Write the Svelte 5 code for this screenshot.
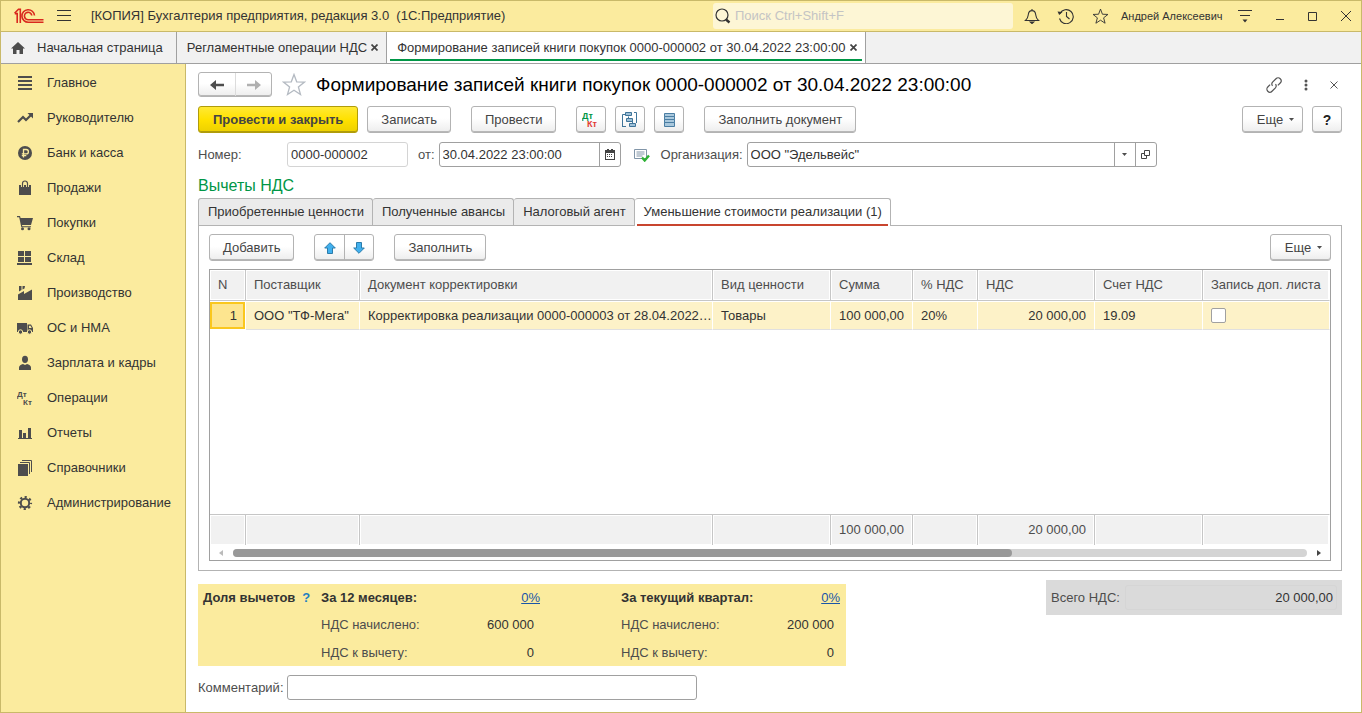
<script>
  const sections = [
    ['list', 'Главное'],
    ['trend', 'Руководителю'],
    ['ruble', 'Банк и касса'],
    ['bag', 'Продажи'],
    ['cart', 'Покупки'],
    ['store', 'Склад'],
    ['factory', 'Производство'],
    ['truck', 'ОС и НМА'],
    ['person', 'Зарплата и кадры'],
    ['entries', 'Операции'],
    ['chart', 'Отчеты'],
    ['books', 'Справочники'],
    ['gear', 'Администрирование'],
  ];

  const docTabs = ['Приобретенные ценности', 'Полученные авансы', 'Налоговый агент', 'Уменьшение стоимости реализации (1)'];
  let activeTab = $state(3);

  const columns = [
    { title: 'N', cls: 'c-n' },
    { title: 'Поставщик', cls: 'c-supplier' },
    { title: 'Документ корректировки', cls: 'c-doc' },
    { title: 'Вид ценности', cls: 'c-kind' },
    { title: 'Сумма', cls: 'c-sum' },
    { title: '% НДС', cls: 'c-rate' },
    { title: 'НДС', cls: 'c-vat' },
    { title: 'Счет НДС', cls: 'c-account' },
    { title: 'Запись доп. листа', cls: 'c-extra' },
  ];

  const shares = [
    { title: 'За 12 месяцев:', percent: '0%', charged: '600 000', deducted: '0' },
    { title: 'За текущий квартал:', percent: '0%', charged: '200 000', deducted: '0' },
  ];

  let number = $state('0000-000002');
  let date = $state('30.04.2022 23:00:00');
  let organization = $state('ООО "Эдельвейс"');
  let comment = $state('');
  let extraSheet = $state(false);
</script>

{#snippet sectionIcon(name)}
  <svg class="section-icon" width="16" height="16" viewBox="0 0 16 16" fill="#4d4d4d" aria-hidden="true">
    {#if name === 'list'}
      <path d="M1 1h14v2H1zM1 5h14v2H1zM1 9h14v2H1zM1 13h14v2H1z" />
    {:else if name === 'trend'}
      <path d="M1 12 6 7l3 3 5-5" fill="none" stroke="#4d4d4d" stroke-width="2.2" />
      <path d="M10.500 3H16v5.500z" />
    {:else if name === 'ruble'}
      <circle cx="8" cy="8" r="7" />
      <path d="M6.500 12.500V4.500h2.700a2.200 2.200 0 0 1 0 4.400H4.800M4.800 10.700h4.500" fill="none" stroke="#fbeb9e" stroke-width="1.300" />
    {:else if name === 'bag'}
      <path d="M2 5h12v10H2z" />
      <path d="M5.500 7V3.500a2.500 2.500 0 0 1 5 0V7" fill="none" stroke="#fbeb9e" stroke-width="3" />
      <path d="M5.500 7V3.500a2.500 2.500 0 0 1 5 0V7" fill="none" stroke="#4d4d4d" stroke-width="1.200" />
    {:else if name === 'cart'}
      <path d="M0 1h3l.600 2H16l-2 7H5l.300 1.300H14v1H4.300L2.200 2.200H0z" />
      <circle cx="5.500" cy="13.800" r="1.500" /><circle cx="12" cy="13.800" r="1.500" />
    {:else if name === 'store'}
      <path d="M1 1h6v5H1zM8 1h6v5H8zM1 7h6v5H1zM8 7h6v5H8zM0 13h15v2H0z" />
    {:else if name === 'factory'}
      <path d="M1 15V9.500L7 6v3l8-4.500V15z" />
      <path d="M2 1h2.500v4L2 6.500zM5.500 1H8l-.5 2.500-2 1z" />
    {:else if name === 'truck'}
      <path d="M0 3h10v9H0zM10.500 4.500H14l2 3.500v4h-5.500z" />
      <path d="M12 5.700h1.500l1.200 2.300H12z" fill="#fbeb9e" />
      <circle cx="3.500" cy="12" r="2.200" stroke="#fbeb9e" stroke-width="1" /><circle cx="12.500" cy="12" r="2.200" stroke="#fbeb9e" stroke-width="1" />
    {:else if name === 'person'}
      <ellipse cx="8" cy="4.300" rx="3" ry="3.600" />
      <path d="M2 15v-2.500c0-2 2-3 4-3.500l2 1 2-1c2 .5 4 1.500 4 3.500V15z" />
    {:else if name === 'entries'}
      <text x="0" y="7" font-size="8" font-weight="700">Дт</text>
      <text x="6" y="15" font-size="8" font-weight="700">Кт</text>
    {:else if name === 'chart'}
      <path d="M1 13h14v1H1zM2 5h3v8H2zM6 8h3v5H6zM11 3h3v10h-3z" />
    {:else if name === 'books'}
      <path d="M1 4h10v12H1z" />
      <path d="M3 2.500h9.500V14M5 .500h9.500V12" fill="none" stroke="#4d4d4d" />
    {:else if name === 'gear'}
      <circle cx="8" cy="8" r="4.200" fill="none" stroke="#4d4d4d" stroke-width="2" />
      <circle cx="8" cy="8" r="6" fill="none" stroke="#4d4d4d" stroke-width="2.200" stroke-dasharray="2.200 2.512" stroke-dashoffset="1.100" />
    {/if}
  </svg>
{/snippet}

{#snippet caret()}
  <svg class="caret" width="5" height="3" viewBox="0 0 5 3" aria-hidden="true"><path d="M0 0h5L2.500 3z" fill="#4d4d4d" /></svg>
{/snippet}

{#snippet star(size, color)}
  <svg width={size} height={size} viewBox="0 0 24 24" fill="none" stroke={color} stroke-width="1.300" aria-hidden="true">
    <path d="M12 1.500l2.700 7.300 7.800.3-6.100 4.800 2.100 7.600-6.500-4.300-6.500 4.300 2.100-7.600L1.500 9.100l7.800-.3z" />
  </svg>
{/snippet}

<div class="window">
  <header class="titlebar">
    <svg class="logo" width="30" height="16" viewBox="0 0 30 16" fill="none" stroke="#d9281e" stroke-width="1.600" aria-label="1С">
      <path d="M.500 5.300 4.500 1.200h1.800V15M.800 5.600h2.400V15" />
      <path d="M20.500 7.500A6.300 6.300 0 1 0 14.500 14.300H29.500" />
      <path d="M17.800 7.500A3.700 3.700 0 1 0 14.500 11.700H29.500" />
    </svg>
    <button class="plain burger" aria-label="Главное меню">
      <svg width="14" height="12" viewBox="0 0 14 12" fill="#333"><path d="M0 0h14v1H0zM0 5h14v1H0zM0 10h14v1H0z" /></svg>
    </button>
    <span class="app-name">[КОПИЯ] Бухгалтерия предприятия, редакция 3.0 &nbsp;(1С:Предприятие)</span>
    <label class="search">
      <svg width="16" height="16" viewBox="0 0 16 16" fill="none" stroke="#333"><circle cx="7" cy="7" r="6" stroke-width="1.200" /><path d="M11 11.500l3.500 3" stroke-width="2.400" /></svg>
      <input type="search" placeholder="Поиск Ctrl+Shift+F" aria-label="Поиск" />
    </label>
    <div class="title-tools">
      <button class="plain" aria-label="Уведомления">
        <svg width="16" height="16" viewBox="0 0 16 16" fill="none" stroke="#333" stroke-width="1.100"><path d="M1.500 12.500C4 10.500 4 9 4.300 6.500 4.600 4 6 2.600 8 2.600s3.400 1.400 3.700 3.900C12 9 12 10.500 14.500 12.500zM8 2.600V1" /><path d="M6.300 14h3.400L8 15.500z" fill="#333" /></svg>
      </button>
      <button class="plain" aria-label="История">
        <svg width="18" height="16" viewBox="0 0 18 16" fill="none" stroke="#333" stroke-width="1.100"><path d="M3 5.500a7 7 0 1 1-.5 5" /><path d="M9.500 4v4.500l3 2.500" /><path d="M.500 3.500l5 .5-3.300 3z" fill="#333" stroke="none" /></svg>
      </button>
      <button class="plain" aria-label="Избранное">{@render star(17, '#333')}</button>
      <span class="user">Андрей Алексеевич</span>
      <button class="plain" aria-label="Настройки панели">
        <svg width="14" height="14" viewBox="0 0 14 14" fill="#333"><path d="M0 1h14v1H0zM2 6h10v1H2zM4.500 10.500h5L7 13.500z" /></svg>
      </button>
      <button class="plain" aria-label="Свернуть">
        <svg width="10" height="10" viewBox="0 0 10 10" fill="#333"><path d="M1 8h8v1H1z" /></svg>
      </button>
      <button class="plain" aria-label="Развернуть">
        <svg width="10" height="10" viewBox="0 0 10 10" fill="none" stroke="#333"><path d="M.500 1.500h8v8h-8z" /></svg>
      </button>
      <button class="plain" aria-label="Закрыть окно">
        <svg width="10" height="10" viewBox="0 0 10 10" fill="none" stroke="#333"><path d="M0 0l10 10M10 0L0 10" /></svg>
      </button>
    </div>
  </header>

  <nav class="page-tabs" aria-label="Открытые страницы">
    <div class="page-tab home">
      <svg width="14" height="12" viewBox="0 0 14 12" fill="#4d4d4d" aria-hidden="true"><path d="M7 0l7 6.500h-2V12H8.500V8h-3v4H2V6.500H0z" /></svg>
      <button class="plain">Начальная страница</button>
    </div>
    <div class="page-tab">
      <button class="plain">Регламентные операции НДС</button>
      <button class="plain tab-close" aria-label="Закрыть вкладку"><svg width="7" height="7" viewBox="0 0 7 7" stroke="#444" stroke-width="1.700"><path d="M.500.500l6 6M6.500.500l-6 6" /></svg></button>
    </div>
    <div class="page-tab current">
      <button class="plain">Формирование записей книги покупок 0000-000002 от 30.04.2022 23:00:00</button>
      <button class="plain tab-close" aria-label="Закрыть вкладку"><svg width="7" height="7" viewBox="0 0 7 7" stroke="#444" stroke-width="1.700"><path d="M.500.500l6 6M6.500.500l-6 6" /></svg></button>
    </div>
  </nav>

  <div class="workspace">
    <nav class="sidebar" aria-label="Разделы">
      {#each sections as [icon, title]}
        <a class="section" href="#{icon}">{@render sectionIcon(icon)}<span>{title}</span></a>
      {/each}
    </nav>

    <main class="document">
      <div class="doc-head">
        <div class="button-pair nav-pair">
          <button aria-label="Назад"><svg width="14" height="10" viewBox="0 0 14 10" fill="#4d4d4d"><path d="M0 5l6-5v3.800h8v2.400H6V10z" /></svg></button>
          <button aria-label="Вперед"><svg width="14" height="10" viewBox="0 0 14 10" fill="#b0b0b0"><path d="M14 5L8 0v3.800H0v2.400h8V10z" /></svg></button>
        </div>
        <button class="plain favorite" aria-label="В избранное">{@render star(24, '#b4bac2')}</button>
        <h1>Формирование записей книги покупок 0000-000002 от 30.04.2022 23:00:00</h1>
        <div class="head-tools">
          <button class="plain" aria-label="Получить ссылку">
            <svg width="16" height="16" viewBox="0 0 16 16" fill="none" stroke="#555" stroke-width="1.200"><g transform="rotate(-45 8 8)"><path d="M5.500 5H2.200a3 3 0 0 0 0 6H7a2.800 2.800 0 0 0 2.600-2.500" /><path d="M10.500 11h3.300a3 3 0 0 0 0-6H9a2.800 2.800 0 0 0-2.600 2.500" /></g></svg>
          </button>
          <button class="plain" aria-label="Дополнительно">
            <svg width="4" height="12" viewBox="0 0 4 12" fill="#555"><circle cx="2" cy="2" r="1.500" /><circle cx="2" cy="6" r="1.500" /><circle cx="2" cy="10" r="1.500" /></svg>
          </button>
          <button class="plain" aria-label="Закрыть">
            <svg width="8" height="8" viewBox="0 0 8 8" fill="none" stroke="#555"><path d="M.500.500l7 7M7.500.500l-7 7" /></svg>
          </button>
        </div>
      </div>

      <div class="toolbar">
        <button class="btn primary">Провести и закрыть</button>
        <button class="btn">Записать</button>
        <button class="btn apart">Провести</button>
        <button class="btn square apart" aria-label="Проводки">
          <svg width="18" height="16" viewBox="0 0 18 16" font-size="9" font-weight="700"><text x="0" y="7" fill="#009646">Дт</text><text x="5" y="15" fill="#e23a34">Кт</text></svg>
        </button>
        <button class="btn square" aria-label="Структура подчиненности">
          <svg width="16" height="16" viewBox="0 0 16 16" fill="#9dc0d8" stroke="#3f7499"><path d="M3 2.500H.500V15M.500 14.500H4M12 .500h2.500V11M6.500 4.500V7M10.500 8.500v3" fill="none" /><path d="M3.500.500h6v3h-6zM4.500 6.500h6v3h-6zM7.500 11.500h6v3h-6z" /></svg>
        </button>
        <button class="btn square" aria-label="Реестр">
          <svg width="11" height="14" viewBox="0 0 11 14" fill="#a9c8dd" stroke="#4b7ea3"><path d="M.500.500h10v3h-10zM.500 3.500h10v3h-10zM.500 6.500h10v3h-10zM.500 9.500h10v4h-10z" /></svg>
        </button>
        <button class="btn apart">Заполнить документ</button>
        <button class="btn more push">Еще {@render caret()}</button>
        <button class="btn square help" aria-label="Справка">?</button>
      </div>

      <div class="fields">
        <label class="first-label" for="number">Номер:</label>
        <input id="number" class="box number" bind:value={number} readonly />
        <label class="date-label" for="date">от:</label>
        <div class="box combo date">
          <input id="date" bind:value={date} />
          <button aria-label="Выбрать дату">
            <svg width="10" height="11" viewBox="0 0 10 11" fill="#444"><path d="M1 1h1V0h2v1h2V0h2v1h2v10H0V1zM1 4v6h8V4z" fill-rule="evenodd" /><path d="M2 5h1v1H2zM4 5h1v1H4zM6 5h1v1H6zM2 7h1v1H2zM4 7h1v1H4zM6 7h1v1H6z" /></svg>
          </button>
        </div>
        <svg class="posted" width="16" height="13" viewBox="0 0 16 13" aria-label="Проведен"><path d="M.500.500h12v9H.500z" fill="#fff" stroke="#8195a8" /><path d="M2.500 3h8M2.500 5h8M2.500 7h6" stroke="#8195a8" /><path d="M8 8.500l2.700 3L15 6.500" fill="none" stroke="#2eb135" stroke-width="2.400" /></svg>
        <label for="organization">Организация:</label>
        <div class="box combo organization">
          <input id="organization" bind:value={organization} />
          <button aria-label="Выбрать из списка">{@render caret()}</button>
          <button aria-label="Открыть"><svg width="9" height="9" viewBox="0 0 9 9" fill="none" stroke="#444"><path d="M3.500.500h5v5h-5zM3 3.500H.500v5h5V6" /></svg></button>
        </div>
      </div>

      <h2>Вычеты НДС</h2>

      <div class="doc-tabs" role="tablist">
        {#each docTabs as title, i}
          <button role="tab" aria-selected={i === activeTab} class:selected={i === activeTab} onclick={() => (activeTab = i)}>{title}</button>
        {/each}
      </div>

      <section class="panel">
        <div class="toolbar inner">
          <button class="btn">Добавить</button>
          <div class="button-pair move-pair">
            <button aria-label="Переместить вверх"><svg width="12" height="12" viewBox="0 0 12 12" fill="#41b0ee" stroke="#2b7cab"><path d="M6 .700L11.300 6H8.500v5.500h-5V6H.700z" /></svg></button>
            <button aria-label="Переместить вниз"><svg width="12" height="12" viewBox="0 0 12 12" fill="#41b0ee" stroke="#2b7cab"><path d="M6 11.300L.700 6h2.800V.500h5V6h2.800z" /></svg></button>
          </div>
          <button class="btn">Заполнить</button>
          <button class="btn more push">Еще {@render caret()}</button>
        </div>

        <div class="grid-frame">
          <table>
            <colgroup>
              {#each columns as c}<col class={c.cls} />{/each}
            </colgroup>
            <thead>
              <tr>{#each columns as c}<th>{c.title}</th>{/each}</tr>
            </thead>
            <tbody>
              <tr class="row">
                <td class="num active-cell">1</td>
                <td>ООО "ТФ-Мега"</td>
                <td>Корректировка реализации 0000-000003 от 28.04.2022…</td>
                <td>Товары</td>
                <td class="num">100 000,00</td>
                <td>20%</td>
                <td class="num">20 000,00</td>
                <td>19.09</td>
                <td><input type="checkbox" aria-label="Запись доп. листа" bind:checked={extraSheet} /></td>
              </tr>
              <tr class="empty"><td colspan="9"></td></tr>
            </tbody>
            <tfoot>
              <tr>
                <td></td><td></td><td></td><td></td>
                <td class="num">100 000,00</td>
                <td></td>
                <td class="num">20 000,00</td>
                <td></td><td></td>
              </tr>
            </tfoot>
          </table>
          <div class="scroller">
            <svg width="4" height="6" viewBox="0 0 4 6" fill="#bbb"><path d="M4 0v6L0 3z" /></svg>
            <div class="track"><div class="thumb"></div></div>
            <svg width="4" height="6" viewBox="0 0 4 6" fill="#444"><path d="M0 0v6l4-3z" /></svg>
          </div>
        </div>
      </section>

      <div class="totals">
        <div class="share">
          <div class="share-title"><b>Доля вычетов</b><button class="plain hint" aria-label="Подсказка">?</button></div>
          {#each shares as s}
            <dl class="share-block">
              <dt><b>{s.title}</b></dt><dd><a href="#share">{s.percent}</a></dd>
              <dt>НДС начислено:</dt><dd class="amount">{s.charged}</dd>
              <dt>НДС к вычету:</dt><dd class="amount">{s.deducted}</dd>
            </dl>
          {/each}
        </div>
        <div class="total">
          <label for="total">Всего НДС:</label>
          <input id="total" value="20 000,00" readonly />
        </div>
      </div>

      <div class="comment">
        <label class="first-label" for="comment">Комментарий:</label>
        <input id="comment" class="box" bind:value={comment} />
      </div>
    </main>
  </div>
</div>

<style>
  :global(body) {
    margin: 0;
    background: #fff;
  }

  .window {
    box-sizing: border-box;
    min-height: 100vh;
    display: flex;
    flex-direction: column;
    border: 1px solid #c9b969;
    background: #fff;
    color: #333;
    font: 13px/16px "Liberation Sans", Arial, sans-serif;
  }

  .window :is(button, input) {
    font: inherit;
    color: inherit;
    box-sizing: border-box;
  }

  svg {
    display: block;
    flex: none;
  }

  .plain {
    display: flex;
    align-items: center;
    padding: 0;
    border: 0;
    background: none;
    white-space: nowrap;
  }

  .titlebar {
    display: flex;
    align-items: center;
    height: 30px;
    padding: 0 10px 0 13px;
    background: #fbeb9e;
    border-bottom: 1px solid #c9b969;
  }

  .burger {
    margin: 0 20px 0 13px;
  }

  .app-name {
    white-space: nowrap;
  }

  .search {
    display: flex;
    align-items: center;
    gap: 4px;
    width: 300px;
    height: 26px;
    box-sizing: border-box;
    padding-left: 2px;
    margin-left: auto;
    border-radius: 3px;
    background: #fdf6d5;
  }

  .search input {
    flex: 1;
    min-width: 0;
    padding: 0;
    border: 0;
    outline: 0;
    background: none;
  }

  .search input::placeholder {
    color: #c4c4c4;
  }

  .title-tools {
    display: flex;
    align-items: center;
    margin-left: 11px;
  }

  .title-tools .plain {
    justify-content: center;
    width: 34px;
  }

  .title-tools .plain:first-child,
  .title-tools .plain:nth-last-child(-n + 4) {
    width: auto;
  }

  .title-tools .plain:nth-last-child(-n + 3) {
    margin-left: 23px;
  }

  .title-tools .plain:nth-child(2) {
    margin-left: 9px;
  }

  .user {
    width: 103px;
    margin: 0 14px 0 4px;
    font-size: 11px;
    white-space: nowrap;
  }

  .page-tabs {
    display: flex;
    height: 31px;
    background: #f1f1f1;
    border-bottom: 1px solid #a0a0a0;
  }

  .page-tab {
    display: flex;
    align-items: center;
    gap: 4px;
    padding: 0 8px 0 10px;
    border-right: 1px solid #a0a0a0;
  }

  .page-tab.home {
    gap: 12px;
    padding: 0 13px 0 10px;
  }

  .page-tab.current {
    background: linear-gradient(#009646, #009646) 3px 27px / calc(100% - 6px) 2px no-repeat #fff;
  }

  .workspace {
    flex: 1;
    display: flex;
  }

  .sidebar {
    flex: none;
    width: 184px;
    padding-top: 1px;
    background: #fbeb9e;
    border-right: 1px solid #c9b969;
  }

  .section {
    display: flex;
    align-items: center;
    gap: 14px;
    height: 35px;
    padding-left: 16px;
    color: #333;
    text-decoration: none;
    white-space: nowrap;
  }

  .document {
    flex: 1;
    min-width: 0;
    display: flex;
    flex-direction: column;
    padding: 8px 19px 12px 12px;
  }

  .doc-head {
    display: flex;
    align-items: center;
    height: 25px;
  }

  .favorite {
    margin: 0 10px;
  }

  h1 {
    margin: 0;
    font-size: 19px;
    line-height: 24px;
    font-weight: 400;
    color: #000;
    white-space: nowrap;
  }

  .head-tools {
    display: flex;
    align-items: center;
    gap: 22px;
    margin-left: auto;
    padding-right: 4px;
  }

  .btn,
  .button-pair {
    height: 27px;
    border: 1px solid #b3b3b3;
    border-radius: 3px;
    background: linear-gradient(#fff 45%, #ededed);
    box-shadow: inset 0 -1px #b8b8b8;
  }

  .window .btn {
    display: flex;
    align-items: center;
    justify-content: center;
    padding: 0 13px;
    color: #444;
    white-space: nowrap;
  }

  .window .btn.primary {
    padding: 0 14px;
    background: linear-gradient(#ffe934, #ffe100 50%, #edd000);
    border-color: #b09c0a;
    box-shadow: inset 0 -1px #b09c0a;
    font-weight: 700;
  }

  .window .btn.square {
    width: 30px;
    padding: 0;
  }

  .window .btn.help {
    font-size: 14px;
    font-weight: 700;
    color: #222;
  }

  .window .btn.more {
    gap: 6px;
    width: 61px;
    padding: 0 6px 0 12px;
  }

  .button-pair {
    display: flex;
    box-sizing: border-box;
  }

  .button-pair button {
    display: flex;
    align-items: center;
    justify-content: center;
    width: 29px;
    padding: 0;
    border: 0;
    background: none;
  }

  .button-pair button + button {
    border-left: 1px solid #b3b3b3;
  }

  .nav-pair {
    height: 25px;
  }

  .nav-pair button {
    width: 36px;
  }

  .nav-pair button + button {
    border-color: #dcdcdc;
  }

  .toolbar {
    display: flex;
    gap: 9px;
    margin-top: 9px;
  }

  .apart {
    margin-left: 11px;
  }

  .push {
    margin-left: auto;
  }

  .fields,
  .comment {
    display: flex;
    align-items: center;
    margin-top: 9px;
    color: #4d4d4d;
  }

  .first-label {
    flex: none;
    width: 89px;
  }

  .box {
    height: 25px;
    border: 1px solid #a0a0a0;
    border-radius: 3px;
    padding: 0 3px;
    background: #fff;
  }

  .window .box,
  .window .box input {
    color: #333;
  }

  .window .number {
    width: 121px;
    border-color: #d4d4d4;
  }

  .date-label {
    margin: 0 4px 0 10px;
  }

  .combo {
    display: flex;
    box-sizing: border-box;
    padding-right: 0;
  }

  .combo input {
    flex: 1;
    min-width: 0;
    padding: 0;
    border: 0;
    outline: 0;
    background: none;
  }

  .combo button {
    display: flex;
    align-items: center;
    justify-content: center;
    width: 21px;
    padding: 0;
    border: 0;
    border-left: 1px solid #a0a0a0;
    background: none;
  }

  .date {
    width: 182px;
  }

  .posted {
    margin: 2px 11px 0 13px;
  }

  .organization {
    width: 410px;
    margin-left: 4px;
  }

  h2 {
    margin: 9px 0 3px;
    font-size: 16px;
    line-height: 19px;
    font-weight: 400;
    color: #009646;
  }

  .doc-tabs {
    display: flex;
  }

  .doc-tabs button {
    height: 27px;
    padding: 0 8px 0 9px;
    border: 1px solid #b3b3b3;
    border-bottom: 0;
    border-left-width: 0;
    border-radius: 3px 3px 0 0;
    background: #ebebeb;
    white-space: nowrap;
  }

  .doc-tabs button:first-child {
    border-left-width: 1px;
  }

  .window .doc-tabs .selected {
    position: relative;
    height: 28px;
    margin-bottom: -1px;
    padding-bottom: 2px;
    background: linear-gradient(#c8452f, #c8452f) 2px 25px / calc(100% - 4px) 2px no-repeat #fff;
  }

  .panel {
    flex: 1;
    display: flex;
    flex-direction: column;
    padding: 8px 10px 9px;
    border: 1px solid #b3b3b3;
  }

  .toolbar.inner {
    margin-top: 0;
  }

  .move-pair {
    margin: 0 11px;
  }

  .grid-frame {
    flex: 1;
    display: flex;
    flex-direction: column;
    margin-top: 8px;
    border: 1px solid #a0a0a0;
  }

  table {
    flex: 1;
    width: 100%;
    table-layout: fixed;
    border-collapse: separate;
    border-spacing: 0;
  }

  .c-n { width: 36px; }
  .c-supplier { width: 114px; }
  .c-kind { width: 118px; }
  .c-sum { width: 82px; }
  .c-rate { width: 65px; }
  .c-vat { width: 117px; }
  .c-account { width: 108px; }
  .c-extra { width: 127px; }

  th,
  td {
    box-sizing: border-box;
    padding: 0 8px;
    overflow: hidden;
    text-align: left;
    font-weight: 400;
    white-space: nowrap;
  }

  th,
  tfoot td {
    height: 31px;
    border-right: 1px solid #c6c6c6;
    background: #f1f1f1;
    color: #4d4d4d;
    box-shadow: inset 0 0 0 1px #fff;
  }

  th {
    border-bottom: 1px solid #c6c6c6;
  }

  tfoot td {
    border-top: 1px solid #c6c6c6;
  }

  th:last-child,
  tfoot td:last-child {
    padding-right: 0;
    border-right-color: #fff;
  }

  .row td {
    height: 29px;
    border-right: 1px solid #fff;
    border-top: 1px solid #fff;
    border-bottom: 1px solid #e0e0e0;
    background: #fdf2c8;
  }

  .window .row .active-cell {
    border-bottom-color: #fff;
    background: #fde58f;
    box-shadow: inset 0 0 0 2px #fac71e;
  }

  .window .num {
    text-align: right;
  }

  .empty td {
    height: 184px;
  }

  .row input {
    display: block;
    width: 15px;
    height: 15px;
    margin: 0;
    appearance: none;
    border: 1px solid #a0a0a0;
    border-radius: 2px;
    background: #fff;
  }

  .row input:checked {
    background: #4d4d4d;
  }

  .scroller {
    display: flex;
    align-items: center;
    gap: 10px;
    height: 15px;
    padding: 0 9px;
  }

  .track {
    flex: 1;
    height: 8px;
    border-radius: 4px;
    background: #d4d4d4;
  }

  .thumb {
    width: 72.5%;
    height: 8px;
    border-radius: 4px;
    background: #999;
  }

  .totals {
    display: flex;
    align-items: flex-start;
    justify-content: space-between;
    margin-top: 9px;
  }

  .share {
    display: flex;
    box-sizing: border-box;
    width: 648px;
    height: 82px;
    margin-top: 4px;
    padding: 0 6px 0 5px;
    background: #fbeb9e;
    line-height: 27px;
  }

  .share-title {
    display: flex;
    gap: 7px;
    width: 118px;
  }

  .share .hint {
    height: 27px;
    font-weight: 700;
    color: #1e7fc0;
  }

  .share-block {
    display: grid;
    grid-template-columns: 1fr auto;
    width: 219px;
    margin: 0;
    color: #4d4d4d;
  }

  .share-block + .share-block {
    margin-left: 81px;
  }

  .share b {
    color: #333;
  }

  dt,
  dd {
    margin: 0;
  }

  dd {
    text-align: right;
    color: #333;
  }

  .amount {
    padding-right: 6px;
  }

  .share a {
    color: #1a56a8;
  }

  .total {
    display: flex;
    align-items: center;
    box-sizing: border-box;
    width: 296px;
    height: 35px;
    padding: 0 5px;
    background: #dadada;
    color: #4d4d4d;
  }

  .total input {
    flex: 1;
    min-width: 0;
    height: 25px;
    margin-left: 5px;
    padding: 0 3px;
    border: 1px solid #d5d5d5;
    border-radius: 3px;
    background: none;
    text-align: right;
  }

  .window .total input {
    color: #333;
  }

  .comment input {
    width: 410px;
  }
</style>
